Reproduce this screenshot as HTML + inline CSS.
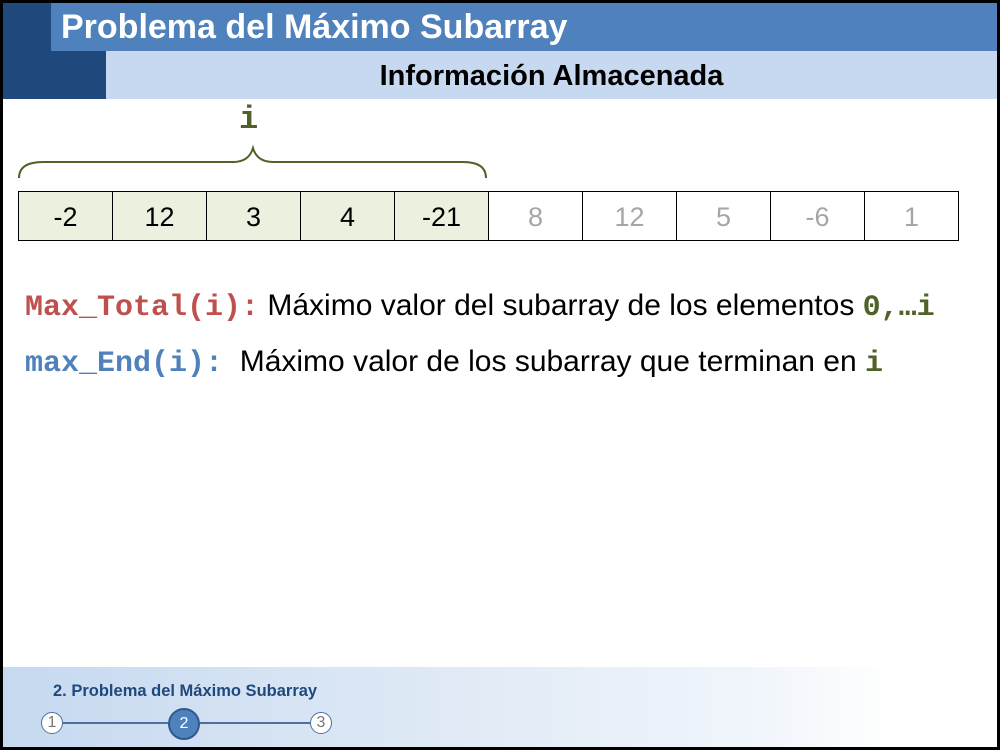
<!DOCTYPE html>
<html><head><meta charset="utf-8"><style>
html,body{margin:0;padding:0}
body{width:1000px;height:750px;position:relative;background:#000;overflow:hidden;font-family:"Liberation Sans",sans-serif}
.page{position:absolute;left:3px;top:3px;width:994px;height:744px;background:#fff;overflow:hidden}
.dark{position:absolute;left:0;top:0;width:103px;height:96px;background:#1f497d}
.top{position:absolute;left:48px;top:0;width:946px;height:48px;background:#4f81bd;color:#fff;font-weight:bold;font-size:34px;line-height:48px;padding-left:10px;box-sizing:border-box}
.sub{position:absolute;left:103px;top:48px;width:891px;height:48px;background:#c6d9f0;font-weight:bold;font-size:29px;line-height:50px;text-align:center;color:#000}
.arr{position:absolute;left:16px;top:188px;display:flex}
.arr div{width:93px;height:48px;border:1px solid #000;margin-left:-1px;text-align:center;line-height:50px;font-size:27px;color:#000;background:#ebf1de}
.arr div.g{background:#fff;color:#a6a6a6}
.mono{font-family:"Liberation Mono",monospace;font-weight:bold}
.row{position:absolute;left:22px;font-size:30px;white-space:nowrap}
.foot{position:absolute;left:0;top:664px;width:994px;height:80px;background:linear-gradient(90deg,#c6d9f0 0%,#dde8f5 40%,#f0f5fb 75%,#fff 90%)}
.ft{position:absolute;left:50px;top:15px;font-size:16.5px;font-weight:bold;color:#1f497d}
.c{position:absolute;width:22px;height:22px;border-radius:50%;border:1.5px solid #4f6f9f;background:#fff;font-size:16px;text-align:center;line-height:20px;color:#777;box-sizing:border-box}
</style></head><body><div class="page">
<div class="dark"></div>
<div class="top">Problema del Máximo Subarray</div>
<div class="sub">Información Almacenada</div>
<div class="mono" style="position:absolute;left:236px;top:98px;font-size:32px;color:#4f6228">i</div>
<svg style="position:absolute;left:0;top:0" width="994" height="200"><path d="M16 175 Q16 159 40 159 L230 159 Q246 159 250 145 Q254 159 270 159 L460 159 Q483 159 483 175" fill="none" stroke="#4f6228" stroke-width="2"/></svg>
<div class="arr"><div>-2</div><div>12</div><div>3</div><div>4</div><div>-21</div><div class="g">8</div><div class="g">12</div><div class="g">5</div><div class="g">-6</div><div class="g">1</div></div>
<div class="row" style="top:286px"><span class="mono" style="color:#c0504d">Max_Total(i):</span> Máximo valor del subarray de los elementos <span class="mono" style="color:#4f6228">0,…i</span></div>
<div class="row" style="top:342px"><span class="mono" style="color:#4f81bd">max_End(i):</span>&nbsp; Máximo valor de los subarray que terminan en <span class="mono" style="color:#4f6228">i</span></div>
<div class="foot">
<div class="ft">2. Problema del Máximo Subarray</div>
<div style="position:absolute;left:60px;top:55px;width:260px;height:1.5px;background:#4f6f9f"></div>
<div class="c" style="left:38px;top:45px">1</div>
<div class="c" style="left:165px;top:41px;width:32px;height:32px;line-height:28px;background:#4f81bd;color:#fff;border:2.5px solid #2f5a8f">2</div>
<div class="c" style="left:307px;top:45px">3</div>
</div>
</div></body></html>
